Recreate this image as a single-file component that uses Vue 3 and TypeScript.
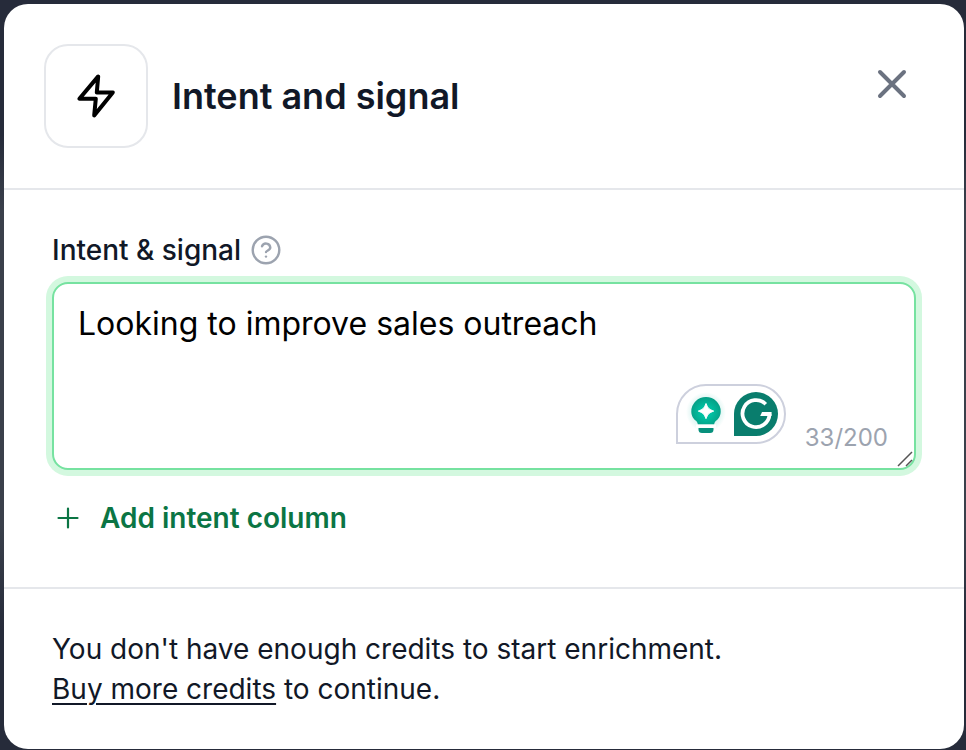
<script setup lang="ts">
import { computed, ref } from 'vue'

const maxLength = 200
const intent = ref('Looking to improve sales outreach')
const counter = computed(() => `${intent.value.length}/${maxLength}`)
</script>

<template>
  <div class="backdrop">
    <section class="dialog" role="dialog" aria-labelledby="dialog-title">
      <header class="header">
        <span class="badge">
          <svg width="48" height="48" viewBox="0 0 24 24" fill="none" stroke="#000" stroke-width="2" stroke-linecap="round" stroke-linejoin="round" aria-hidden="true">
            <path d="M13.100 2.200 3.700 13.400h8.200L11.100 21.700 20.400 10.200h-8z" />
          </svg>
        </span>
        <h1 id="dialog-title" class="title">Intent and signal</h1>
        <button class="close" type="button" aria-label="Close">
          <svg width="32" height="32" viewBox="0 0 32 32" fill="none" stroke="#6b7280" stroke-width="4" stroke-linecap="round" aria-hidden="true">
            <path d="M4 4l24 24M28 4L4 28" />
          </svg>
        </button>
      </header>

      <div class="body">
        <div class="label-row">
          <label class="label" for="intent">Intent &amp; signal</label>
          <button class="help" type="button" aria-label="Help">
            <svg width="30" height="30" viewBox="0 0 30 30" fill="none" stroke="#9ca3af" stroke-width="2.400" stroke-linecap="round" stroke-linejoin="round" aria-hidden="true">
              <circle cx="15" cy="15" r="13.300" />
              <path d="M11 11.300a4.300 4.300 0 0 1 8.300 1.300c0 2.800-4.300 3.200-4.300 4.400" />
              <path d="M15 21.600h.010" />
            </svg>
          </button>
        </div>

        <div class="field">
          <textarea id="intent" v-model="intent" class="textarea" :maxlength="maxLength" spellcheck="false"></textarea>
          <div class="tools">
            <div class="assistant">
              <button class="tool" type="button" aria-label="Suggestions">
                <svg width="44" height="44" viewBox="0 0 44 44" aria-hidden="true">
                  <defs>
                    <radialGradient id="glow">
                      <stop offset="0.600" stop-color="#00b39a" stop-opacity="0.160" />
                      <stop offset="1" stop-color="#00b39a" stop-opacity="0" />
                    </radialGradient>
                    <radialGradient id="bulb" cx="0.500" cy="0.550" r="0.600">
                      <stop offset="0.300" stop-color="#00c2a3" />
                      <stop offset="1" stop-color="#079880" />
                    </radialGradient>
                  </defs>
                  <circle cx="22" cy="20" r="20" fill="url(#glow)" />
                  <path fill="url(#bulb)" d="M22 5A14.700 14.400 0 0 0 7.300 19.400c0 5 2.700 7.600 4.700 9.400 1 1 1.500 1.900 1.900 3.700h16.200c.4-1.800.9-2.700 1.900-3.700 2-1.800 4.700-4.400 4.700-9.400A14.700 14.400 0 0 0 22 5z" />
                  <path fill="#fff" stroke="#fff" stroke-linejoin="round" d="M22 11.500c1.800 4.600 3.200 5.900 7.700 7.600-4.500 1.700-5.900 3-7.700 7.600-1.800-4.600-3.200-5.900-7.700-7.600 4.500-1.700 5.900-3 7.700-7.600z" />
                  <path fill="#fff" d="M12 32.500h20v3.500H12z" />
                  <path fill="#07907c" d="M14.500 36h15v1.500q0 3.500-3.500 3.500h-8q-3.500 0-3.500-3.500z" />
                </svg>
              </button>
              <button class="tool" type="button" aria-label="Writing check">
                <svg width="44" height="44" viewBox="0 0 44 44" aria-hidden="true">
                  <path fill="#097d6d" d="M0 22a22 22 0 1 1 22 22H0z" />
                  <path fill="none" stroke="#fff" stroke-width="3.800" d="M31.700 12.200A13.500 13.500 0 1 0 35.500 22" />
                  <path fill="#fff" d="M28 20h9.600v4h-11.400z" />
                </svg>
              </button>
            </div>
            <output class="counter" for="intent">{{ counter }}</output>
          </div>
          <svg class="grip" width="16" height="16" viewBox="0 0 16 16" fill="none" stroke="#555" stroke-width="1.500" aria-hidden="true">
            <path d="M1 15L15 1M9 15l6-6" />
          </svg>
        </div>

        <button class="add" type="button">
          <svg width="32" height="32" viewBox="0 0 32 32" fill="none" stroke="#0b7544" stroke-width="2.200" stroke-linecap="round" aria-hidden="true">
            <path d="M16 6.500v19M6.500 16h19" />
          </svg>
          <span>Add intent column</span>
        </button>
      </div>

      <footer class="footer">
        <p class="notice">
          You don't have enough credits to start enrichment.<br />
          <a class="link" href="#credits">Buy more credits</a> to continue.
        </p>
      </footer>
    </section>
  </div>
</template>

<style>
body {
  background: #262b3a;
}
</style>

<style scoped>
.backdrop {
  box-sizing: border-box;
  min-height: 100vh;
  display: flex;
  padding: 4px 2px 1px 4px;
  background: linear-gradient(#262b3a 18%, #3a404b 28%, #3a404b 70%, #262b3a 84%);
  color: #111827;
  font-family: Inter, 'Liberation Sans', sans-serif;
  font-size: 28px;
  line-height: 40px;
}

button {
  border: 0;
  padding: 0;
  background: none;
  color: inherit;
  font: inherit;
  cursor: pointer;
}

svg {
  display: block;
}

.dialog {
  flex: 1;
  min-width: 0;
  display: flex;
  flex-direction: column;
  background: #fff;
  border-radius: 24px;
}

.header {
  display: flex;
  align-items: center;
  gap: 24px;
  padding: 40px 56px 40px 40px;
  border-bottom: 2px solid #e5e7eb;
}

.badge {
  display: grid;
  place-items: center;
  box-sizing: border-box;
  width: 104px;
  height: 104px;
  border: 2px solid #e5e7eb;
  border-radius: 24px;
}

.title {
  flex: 1;
  margin: 0;
  font-size: 36px;
  line-height: 56px;
  font-weight: 600;
}

.close {
  align-self: flex-start;
  padding-top: 24px;
}

.body {
  flex: 1;
  padding: 40px 48px;
}

.label-row {
  display: flex;
  align-items: center;
  gap: 10px;
  margin-bottom: 12px;
}

.label {
  font-weight: 500;
}

.field {
  position: relative;
  display: flex;
}

.textarea {
  flex: 1;
  min-width: 0;
  box-sizing: border-box;
  height: 188px;
  padding: 16px 24px;
  border: 2px solid #76e2a0;
  border-radius: 16px;
  outline: 0;
  box-shadow: 0 0 0 6px #d3f8df;
  background: #fff;
  color: #000;
  font: inherit;
  font-size: 32px;
  line-height: 48px;
  resize: none;
}

.tools {
  position: absolute;
  right: 28px;
  bottom: 16px;
  display: flex;
  align-items: flex-end;
  gap: 19px;
}

.assistant {
  display: flex;
  gap: 6px;
  margin-bottom: 10px;
  padding: 6px;
  border: 2px solid #cdd0dd;
  border-radius: 30px 30px 30px 0;
  background: #fff;
}

.counter {
  color: #9ca3af;
  font-size: 24px;
  line-height: 32px;
}

.grip {
  position: absolute;
  right: 3px;
  bottom: 3px;
  pointer-events: none;
}

.add {
  display: flex;
  align-items: center;
  gap: 16px;
  margin-top: 28px;
  color: #0b7544;
  font-weight: 600;
}

.footer {
  padding: 40px 48px;
  border-top: 2px solid #e5e7eb;
}

.notice {
  margin: 0;
}

.link {
  color: inherit;
  text-decoration: underline;
  text-underline-offset: 4px;
  text-decoration-thickness: 2px;
}
</style>
